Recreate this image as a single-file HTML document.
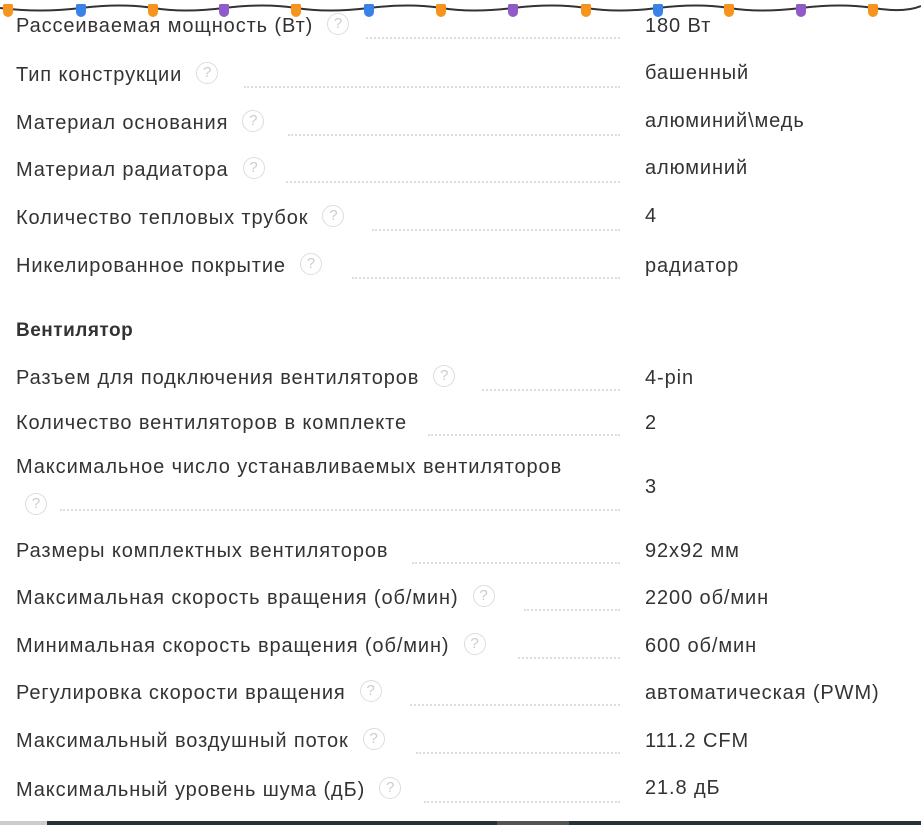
<!DOCTYPE html>
<html><head><meta charset="utf-8"><style>
body{margin:0;width:921px;height:825px;background:#fff;position:relative;overflow:hidden;font-family:"Liberation Sans",sans-serif;color:#333;font-size:20px;letter-spacing:0.9px}
.r{position:absolute;left:16px;white-space:nowrap;line-height:24px}
.v{position:absolute;left:645px;white-space:nowrap;line-height:24px}
.q{display:inline-block;width:22px;height:22px;border:1.5px solid #ddd;border-radius:50%;box-sizing:border-box;color:#ccc;font-size:15px;line-height:19px;text-align:center;vertical-align:middle;margin-left:14px;position:relative;top:-3px;letter-spacing:0}
.d{position:absolute;height:0;border-top:2px dotted #ddd;right:301px}
.h{position:absolute;left:16px;font-weight:bold;font-size:19px;letter-spacing:0.5px}
.l{position:absolute;top:4px;width:10px;height:13px;border-radius:2px 2px 6px 6px}
</style></head><body>
<svg style="position:absolute;left:0;top:0" width="921" height="14"><path d="M0 8 Q40 13 81 8 T153 8 T224 8 T296 8 T369 8 T441 8 T513 8 T586 8 T658 8 T729 8 T801 8 T873 8 T921 6" stroke="#333" stroke-width="2" fill="none"/></svg>
<div class="l" style="left:3px;background:#f7941d"></div><div class="l" style="left:76px;background:#3b82e8"></div><div class="l" style="left:148px;background:#f7941d"></div><div class="l" style="left:219px;background:#8e5bc9"></div><div class="l" style="left:291px;background:#f7941d"></div><div class="l" style="left:364px;background:#3b82e8"></div><div class="l" style="left:436px;background:#f7941d"></div><div class="l" style="left:508px;background:#8e5bc9"></div><div class="l" style="left:581px;background:#f7941d"></div><div class="l" style="left:653px;background:#3b82e8"></div><div class="l" style="left:724px;background:#f7941d"></div><div class="l" style="left:796px;background:#8e5bc9"></div><div class="l" style="left:868px;background:#f7941d"></div>

<div class="r" style="top:14px">Рассеиваемая мощность (Вт)<span class="q">?</span></div><div class="d" style="left:366px;top:37px"></div><div class="v" style="top:14px">180 Вт</div>
<div class="r" style="top:63px">Тип конструкции<span class="q">?</span></div><div class="d" style="left:244px;top:86px"></div><div class="v" style="top:61px">башенный</div>
<div class="r" style="top:111px">Материал основания<span class="q">?</span></div><div class="d" style="left:288px;top:134px"></div><div class="v" style="top:109px">алюминий\медь</div>
<div class="r" style="top:158px">Материал радиатора<span class="q">?</span></div><div class="d" style="left:286px;top:181px"></div><div class="v" style="top:156px">алюминий</div>
<div class="r" style="top:206px">Количество тепловых трубок<span class="q">?</span></div><div class="d" style="left:372px;top:229px"></div><div class="v" style="top:204px">4</div>
<div class="r" style="top:254px">Никелированное покрытие<span class="q">?</span></div><div class="d" style="left:352px;top:277px"></div><div class="v" style="top:254px">радиатор</div>
<div class="h" style="top:320px">Вентилятор</div>
<div class="r" style="top:366px">Разъем для подключения вентиляторов<span class="q">?</span></div><div class="d" style="left:482px;top:389px"></div><div class="v" style="top:366px">4-pin</div>
<div class="r" style="top:411px">Количество вентиляторов в комплекте</div><div class="d" style="left:428px;top:434px"></div><div class="v" style="top:411px">2</div>
<div class="r" style="top:455px">Максимальное число устанавливаемых вентиляторов</div>
<div class="q" style="position:absolute;left:25px;top:493px;margin:0">?</div><div class="d" style="left:60px;top:509px"></div><div class="v" style="top:475px">3</div>
<div class="r" style="top:539px">Размеры комплектных вентиляторов</div><div class="d" style="left:412px;top:562px"></div><div class="v" style="top:539px">92x92 мм</div>
<div class="r" style="top:586px">Максимальная скорость вращения (об/мин)<span class="q">?</span></div><div class="d" style="left:524px;top:609px"></div><div class="v" style="top:586px">2200 об/мин</div>
<div class="r" style="top:634px">Минимальная скорость вращения (об/мин)<span class="q">?</span></div><div class="d" style="left:518px;top:657px"></div><div class="v" style="top:634px">600 об/мин</div>
<div class="r" style="top:681px">Регулировка скорости вращения<span class="q">?</span></div><div class="d" style="left:410px;top:704px"></div><div class="v" style="top:681px">автоматическая (PWM)</div>
<div class="r" style="top:729px">Максимальный воздушный поток<span class="q">?</span></div><div class="d" style="left:416px;top:752px"></div><div class="v" style="top:729px">111.2 CFM</div>
<div class="r" style="top:778px">Максимальный уровень шума (дБ)<span class="q">?</span></div><div class="d" style="left:424px;top:801px"></div><div class="v" style="top:776px">21.8 дБ</div>
<div style="position:absolute;left:0;top:821px;width:47px;height:4px;background:#ccc"></div>
<div style="position:absolute;left:47px;top:821px;width:874px;height:4px;background:#263238"></div>
<div style="position:absolute;left:497px;top:821px;width:72px;height:4px;background:#555"></div>
</body></html>
